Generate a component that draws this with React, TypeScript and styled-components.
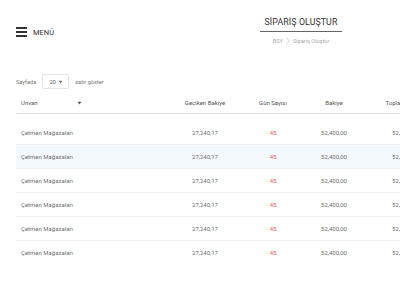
import React from "react";
import styled, { createGlobalStyle } from "styled-components";

const GlobalStyle = createGlobalStyle`
  html, body {
    margin: 0;
    padding: 0;
    background: #fff;
    overflow: hidden;
  }
  body {
    font-family: Roboto, "Liberation Sans", sans-serif;
    color: #555;
  }
`;

const Page = styled.div`
  width: 400px;
  height: 300px;
  padding-left: 16px;
  box-sizing: border-box;
  overflow: hidden;
`;

const TopBar = styled.div`
  display: flex;
  justify-content: space-between;
  align-items: flex-start;
  height: 52px;
  padding-right: 58px;
`;

const MenuButton = styled.div`
  display: flex;
  align-items: center;
  gap: 6px;
  margin-top: 26px;
  height: 12px;
  font-size: 7.5px;
  color: #333;
  cursor: pointer;
`;

const Burger = styled.div`
  display: flex;
  flex-direction: column;
  gap: 2.5px;
  span {
    display: block;
    width: 11px;
    height: 1.5px;
    background: #333;
  }
`;

const TitleBlock = styled.div`
  display: flex;
  flex-direction: column;
  align-items: center;
  width: 82px;
  padding-top: 16px;
`;

const Title = styled.div`
  font-size: 8.8px;
  line-height: 12px;
  letter-spacing: 0.1px;
  color: #333;
`;

const Underline = styled.div`
  align-self: stretch;
  height: 1px;
  background: #666;
  margin-top: 3px;
`;

const Crumbs = styled.div`
  display: flex;
  align-items: center;
  gap: 2px;
  margin-top: 5px;
  font-size: 5.6px;
  line-height: 8px;
  color: #aaa;
`;

const Toolbar = styled.div`
  display: flex;
  align-items: center;
  gap: 6px;
  margin-top: 22px;
  height: 15px;
  font-size: 5.6px;
  color: #777;
`;

const PageSize = styled.div`
  display: flex;
  align-items: center;
  justify-content: space-between;
  box-sizing: border-box;
  width: 27px;
  height: 15px;
  padding: 0 5px 0 6px;
  border: 1px solid #e6e6e6;
  border-radius: 2px;
  font-size: 6px;
  color: #666;
`;

const Table = styled.table`
  table-layout: fixed;
  width: 432px;
  border-collapse: collapse;
  font-size: 6px;
`;

const Th = styled.th<{ $align?: "left" | "center" }>`
  height: 24px;
  box-sizing: border-box;
  padding: 3px 0 0 ${(p) => (p.$align === "left" ? "5px" : "0")};
  text-align: ${(p) => p.$align ?? "center"};
  font-weight: 400;
  color: #555;
  border-bottom: 1px solid #e2e2e2;
  white-space: nowrap;
`;

const Row = styled.tr<{ $active?: boolean }>`
  background: ${(p) => (p.$active ? "#f3f9fd" : "transparent")};
  border-bottom: 1px solid #efefef;
  &:first-child td {
    height: 31px;
    padding-top: 7px;
  }
  &:last-child {
    border-bottom: none;
  }
`;

const Td = styled.td<{ $align?: "left" | "center"; $alert?: boolean }>`
  height: 24px;
  box-sizing: border-box;
  padding: 0 0 0 ${(p) => (p.$align === "left" ? "5px" : "0")};
  text-align: ${(p) => p.$align ?? "center"};
  color: ${(p) => (p.$alert ? "#ee5a5a" : "#6f6f6f")};
  white-space: nowrap;
`;

const SortIcon = styled.svg`
  margin-left: 39px;
  vertical-align: middle;
`;

const Caret = () => (
  <svg width="5" height="4" viewBox="0 0 5 4">
    <path d="M0.5 0.8h4L2.5 3.4z" fill="#777" />
  </svg>
);

const rows = Array.from({ length: 6 }, (_, i) => ({
  id: i,
  name: "Çetmen Mağazaları",
  overdue: "27,240,17",
  days: 45,
  balance: "52,400,00",
  total: "52,400,00",
}));

export default function App() {
  return (
    <Page>
      <GlobalStyle />
      <TopBar>
        <MenuButton>
          <Burger>
            <span />
            <span />
            <span />
          </Burger>
          MENÜ
        </MenuButton>
        <TitleBlock>
          <Title>SİPARİŞ OLUŞTUR</Title>
          <Underline />
          <Crumbs>
            BSY
            <svg width="6" height="8" viewBox="0 0 6 8">
              <path d="M1.5 0.8L4.5 4L1.5 7.2" fill="none" stroke="#bbb" strokeWidth="0.7" />
            </svg>
            Sipariş Oluştur
          </Crumbs>
        </TitleBlock>
      </TopBar>

      <Toolbar>
        Sayfada
        <PageSize>
          20
          <Caret />
        </PageSize>
        satır göster
      </Toolbar>

      <Table>
        <colgroup>
          <col style={{ width: 154 }} />
          <col style={{ width: 70 }} />
          <col style={{ width: 66 }} />
          <col style={{ width: 56 }} />
          <col style={{ width: 86 }} />
        </colgroup>
        <thead>
          <tr>
            <Th $align="left">
              Unvan
              <SortIcon width="5" height="4" viewBox="0 0 5 4">
                <path d="M0.5 0.8h4L2.5 3.4z" fill="#555" />
              </SortIcon>
            </Th>
            <Th>Geciken Bakiye</Th>
            <Th>Gün Sayısı</Th>
            <Th>Bakiye</Th>
            <Th>Toplam Bakiye</Th>
          </tr>
        </thead>
        <tbody>
          {rows.map((r) => (
            <Row key={r.id} $active={r.id === 1}>
              <Td $align="left">{r.name}</Td>
              <Td>{r.overdue}</Td>
              <Td $alert>{r.days}</Td>
              <Td>{r.balance}</Td>
              <Td>{r.total}</Td>
            </Row>
          ))}
        </tbody>
      </Table>
    </Page>
  );
}
